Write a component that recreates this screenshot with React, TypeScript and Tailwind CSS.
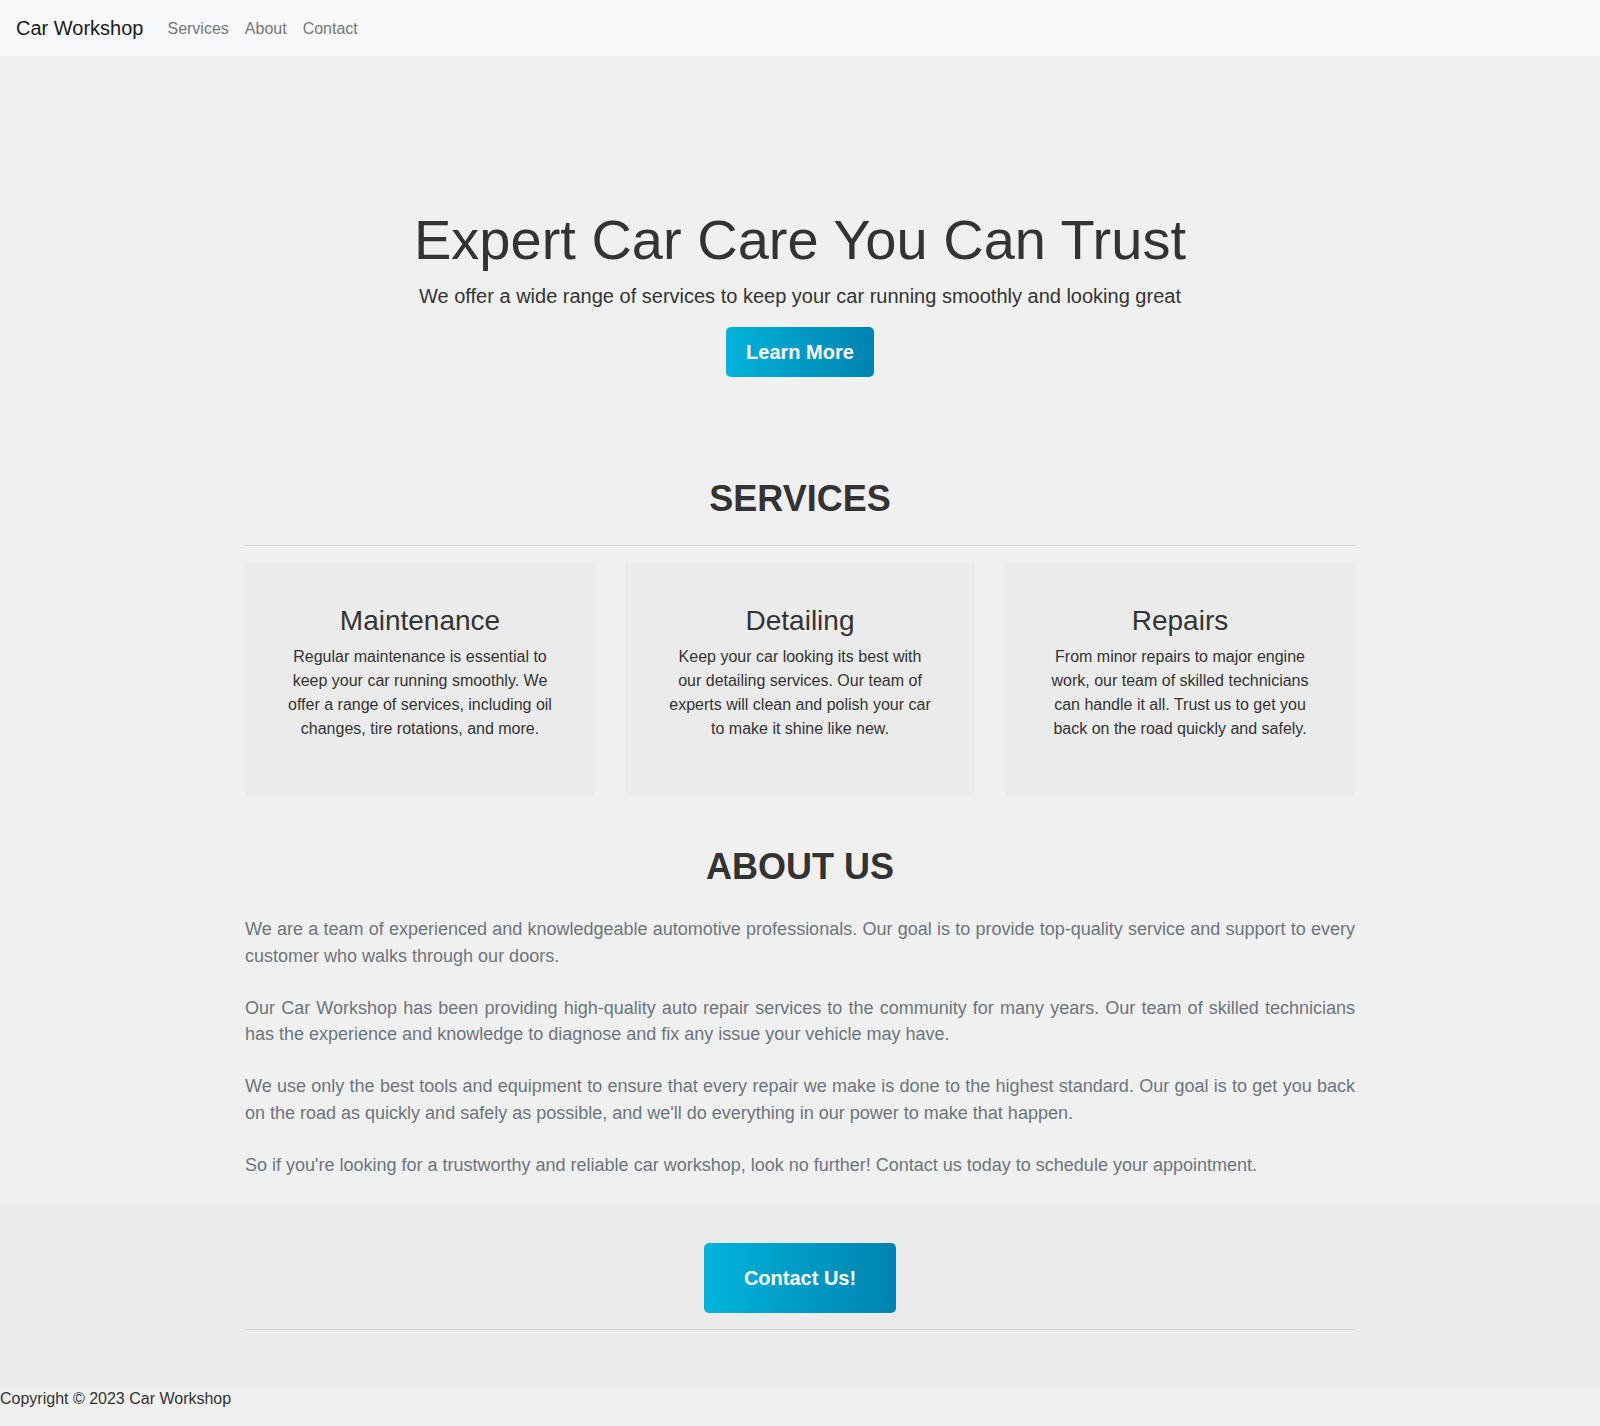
const SERVICES = [
  {
    title: "Maintenance",
    text: "Regular maintenance is essential to keep your car running smoothly. We offer a range of services, including oil changes, tire rotations, and more.",
  },
  {
    title: "Detailing",
    text: "Keep your car looking its best with our detailing services. Our team of experts will clean and polish your car to make it shine like new.",
  },
  {
    title: "Repairs",
    text: "From minor repairs to major engine work, our team of skilled technicians can handle it all. Trust us to get you back on the road quickly and safely.",
  },
];

const ABOUT = [
  "We are a team of experienced and knowledgeable automotive professionals. Our goal is to provide top-quality service and support to every customer who walks through our doors.",
  "Our Car Workshop has been providing high-quality auto repair services to the community for many years. Our team of skilled technicians has the experience and knowledge to diagnose and fix any issue your vehicle may have.",
  "We use only the best tools and equipment to ensure that every repair we make is done to the highest standard. Our goal is to get you back on the road as quickly and safely as possible, and we'll do everything in our power to make that happen.",
  "So if you're looking for a trustworthy and reliable car workshop, look no further! Contact us today to schedule your appointment.",
];

function Navbar() {
  return (
    <nav className="flex h-[56px] items-center bg-[#f8f9fa] px-4">
      <a href="#" className="mr-4 text-[20px] leading-[30px] text-[#1a1a1a]">
        Car Workshop
      </a>
      <ul className="mt-[2px] flex items-center">
        {["Services", "About", "Contact"].map((l) => (
          <li key={l}>
            <a href="#" className="block px-2 text-[16px] leading-6 text-[#777]">
              {l}
            </a>
          </li>
        ))}
      </ul>
    </nav>
  );
}

export default function App() {
  return (
    <div
      className="min-h-[1426px] bg-[#f0f0f0] text-[#333]"
      style={{ fontFamily: '"Liberation Sans", Arial, sans-serif' }}
    >
      <Navbar />

      <header className="flex flex-col items-center pt-[150px] pb-[100px] text-center">
        <h1 className="mb-2 text-[56px] leading-[1.2] font-normal">
          Expert Car Care You Can Trust
        </h1>
        <p className="mb-4 text-[20px] leading-[30px]">
          We offer a wide range of services to keep your car running smoothly and looking great
        </p>
        <a
          href="#"
          className="rounded-[5px] bg-gradient-to-r from-[#00b4db] to-[#0083b0] px-5 py-[10px] text-[20px] leading-[30px] font-bold text-white"
        >
          Learn More
        </a>
      </header>

      <section className="mx-auto max-w-[1140px] px-[15px]">
        <h2 className="mb-[25px] text-center text-[36px] leading-[1.2] font-bold">SERVICES</h2>
        <hr className="mb-4 border-t border-[#d6d6d6]" />
        <div className="grid grid-cols-3 gap-[30px]">
          {SERVICES.map((s) => (
            <div key={s.title} className="bg-[#ebebeb] px-10 pt-[42px] pb-10 text-center">
              <h3 className="mb-[7px] text-[28px] leading-[1.2]">{s.title}</h3>
              <p className="mb-[15px] text-[16px] leading-6">{s.text}</p>
            </div>
          ))}
        </div>
      </section>

      <section className="mx-auto mt-[49px] max-w-[1140px] px-[15px]">
        <h2 className="mb-[28px] text-center text-[36px] leading-[1.2] font-bold">ABOUT US</h2>
        {ABOUT.map((t, i) => (
          <p key={i} className="mb-[25.5px] text-justify text-[18px] leading-[26.5px] text-[#6c757d]">
            {t}
          </p>
        ))}
      </section>

      <section className="bg-[#ebebeb] pt-[39px] pb-[41px]">
        <div className="mx-auto max-w-[1140px] px-[15px]">
          <div className="flex justify-center">
            <a
              href="#"
              className="rounded-[5px] bg-gradient-to-r from-[#00b4db] to-[#0083b0] px-10 py-5 text-[20px] leading-[30px] font-bold text-white"
            >
              Contact Us!
            </a>
          </div>
          <hr className="my-4 border-t border-[#d6d6d6]" />
        </div>
      </section>

      <footer>
        <p className="text-[16px] leading-6 text-[#333]">Copyright © 2023 Car Workshop</p>
      </footer>
    </div>
  );
}
